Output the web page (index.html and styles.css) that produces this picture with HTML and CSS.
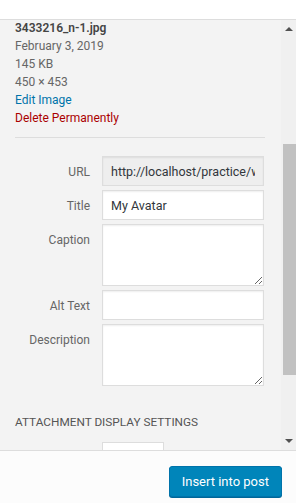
FILE: index.html
```html
<!DOCTYPE html>
<html lang="en">
<head>
    <meta charset="UTF-8">
    <meta name="viewport" content="width=device-width, initial-scale=1.0">
    <title>Attachment Details</title>
    <link rel="stylesheet" href="styles.css">
</head>
<body>
    <div class="media-modal">
        <div class="modal-top"></div>

        <div class="modal-body">
            <div class="sidebar">
                <div class="details">
                    <div class="filename">3433216_n-1.jpg</div>
                    <div class="meta">February 3, 2019</div>
                    <div class="meta">145 KB</div>
                    <div class="meta">450 &times; 453</div>
                    <a href="#" class="edit-link">Edit Image</a>
                    <a href="#" class="delete-link">Delete Permanently</a>
                </div>

                <div class="settings">
                    <label class="setting">
                        <span class="name">URL</span>
                        <input type="text" class="field readonly" value="http://localhost/practice/wp-content/uploads/2019/02/3433216_n-1.jpg" readonly>
                    </label>
                    <label class="setting">
                        <span class="name">Title</span>
                        <input type="text" class="field" value="My Avatar">
                    </label>
                    <label class="setting">
                        <span class="name">Caption</span>
                        <textarea class="field area"></textarea>
                    </label>
                    <label class="setting">
                        <span class="name">Alt Text</span>
                        <input type="text" class="field">
                    </label>
                    <label class="setting">
                        <span class="name">Description</span>
                        <textarea class="field area"></textarea>
                    </label>
                </div>

                <h2 class="section-title">Attachment Display Settings</h2>
                <div class="setting">
                    <span class="name"></span>
                    <div class="select-box"></div>
                </div>
            </div>

            <div class="scrollbar">
                <div class="scroll-btn up"><span class="arrow-up"></span></div>
                <div class="track"><div class="thumb"></div></div>
                <div class="scroll-btn down"><span class="arrow-down"></span></div>
            </div>
        </div>

        <div class="modal-toolbar">
            <button class="button-primary">Insert into post</button>
        </div>
    </div>
</body>
</html>
```

FILE: styles.css
```css
body {
    margin: 0;
    font-family: Roboto, "Noto Sans", sans-serif;
    font-size: 12px;
    color: #444;
    background-color: #fff;
}
.media-modal {
    width: 296px;
    height: 503px;
    display: flex;
    flex-direction: column;
    overflow: hidden;
}
.modal-top {
    height: 19px;
    border-bottom: 1px solid #ddd;
    background-color: #fff;
}
.modal-body {
    height: 430px;
    display: flex;
    background-color: #f3f3f3;
}
.sidebar {
    flex: 1;
    overflow: hidden;
    padding: 0 16px 0 15px;
}
.details {
    margin-top: -1px;
    padding-bottom: 10px;
    border-bottom: 1px solid #ddd;
    line-height: 18px;
}
.details .filename {
    font-weight: 600;
    color: #444;
}
.details .meta {
    color: #666;
}
.details a {
    display: block;
    text-decoration: none;
}
.edit-link {
    color: #0073aa;
}
.delete-link {
    color: #a00;
}
.settings {
    margin-top: 18px;
}
.setting {
    display: flex;
    margin-bottom: 4px;
}
.setting .name {
    width: 75px;
    padding: 7px 12px 0 0;
    text-align: right;
    line-height: 18px;
    color: #666;
    flex-shrink: 0;
}
.field {
    box-sizing: border-box;
    width: 162px;
    height: 30px;
    margin: 0;
    padding: 0 8px;
    border: 1px solid #ddd;
    border-radius: 0;
    background-color: #fff;
    box-shadow: inset 0 1px 2px rgba(0, 0, 0, 0.07);
    font-family: inherit;
    font-size: 12.5px;
    color: #32373c;
    outline: none;
}
.field.readonly {
    background-color: #eee;
}
.field.area {
    height: 62px;
    padding: 6px 8px;
    resize: vertical;
}
.section-title {
    margin: 27px 0 11px;
    font-size: 11.8px;
    font-weight: 400;
    line-height: 18px;
    text-transform: uppercase;
    color: #555;
}
.select-box {
    width: 62px;
    height: 30px;
    box-sizing: border-box;
    border: 1px solid #ddd;
    background-color: #fff;
}
.scrollbar {
    width: 15px;
    display: flex;
    flex-direction: column;
    background-color: #f0f0f0;
}
.scroll-btn {
    height: 15px;
    display: flex;
    justify-content: center;
    box-sizing: border-box;
}
.scroll-btn.up {
    padding-top: 7px;
}
.scroll-btn.down {
    padding-top: 4px;
}
.arrow-up {
    width: 0;
    height: 0;
    border-left: 4px solid transparent;
    border-right: 4px solid transparent;
    border-bottom: 4px solid #505050;
}
.arrow-down {
    width: 0;
    height: 0;
    border-left: 4px solid transparent;
    border-right: 4px solid transparent;
    border-top: 4px solid #505050;
}
.track {
    flex: 1;
}
.thumb {
    margin: 109px 0 0 2px;
    height: 231px;
    background-color: #c1c1c1;
}
.modal-toolbar {
    flex: 1;
    display: flex;
    justify-content: flex-end;
    align-items: flex-start;
    padding: 15px 14px 0 0;
    border-top: 1px solid #ddd;
    background-color: #fcfcfc;
}
.button-primary {
    height: 31px;
    padding: 0 12px;
    border: 1px solid #0073aa;
    border-radius: 3px;
    background-color: #0085ba;
    box-shadow: 0 1px 0 #006799;
    color: #fff;
    font-family: inherit;
    font-size: 13px;
    line-height: 29px;
    cursor: pointer;
}
```
